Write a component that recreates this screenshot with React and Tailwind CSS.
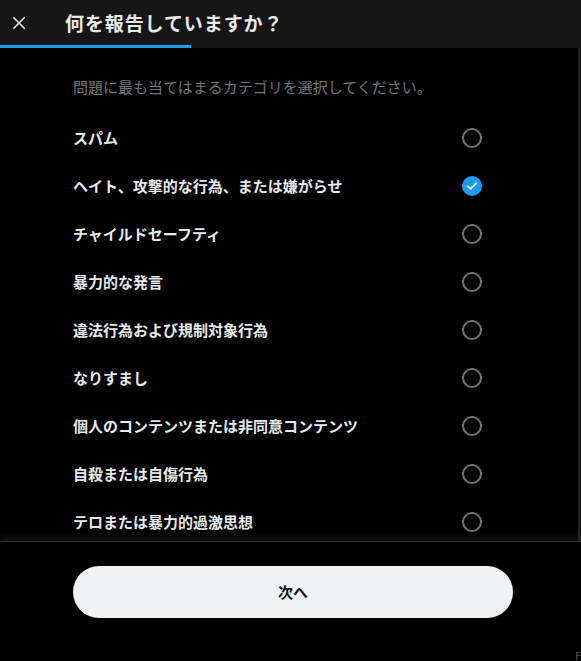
import { useState } from 'react'

const categories = [
  'スパム',
  'ヘイト、攻撃的な行為、または嫌がらせ',
  'チャイルドセーフティ',
  '暴力的な発言',
  '違法行為および規制対象行為',
  'なりすまし',
  '個人のコンテンツまたは非同意コンテンツ',
  '自殺または自傷行為',
  'テロまたは暴力的過激思想',
]

function Radio({ checked }) {
  if (checked) {
    return (
      <span className="flex h-5 w-5 items-center justify-center rounded-full bg-[#1d9bf0]">
        <svg viewBox="0 0 24 24" className="h-3.5 w-3.5" fill="none" stroke="white" strokeWidth="3" strokeLinecap="round" strokeLinejoin="round">
          <path d="M5 12.5l4.5 4.5L19 7.5" />
        </svg>
      </span>
    )
  }
  return <span className="block h-5 w-5 rounded-full border-2 border-[#6e767d]" />
}

export default function App() {
  const [selected, setSelected] = useState(1)

  return (
    <div
      className="flex h-[661px] w-[581px] flex-col overflow-hidden bg-black text-[#e7e9ea]"
      style={{ fontFamily: '"Noto Sans CJK JP", "Noto Sans", sans-serif' }}
    >
      {/* ヘッダー */}
      <div className="flex shrink-0 flex-col bg-[#161616]">
        <div className="flex h-[45px] items-center">
          <button className="ml-[9px] flex h-5 w-5 items-center justify-center text-[#e7e9ea]">
            <svg viewBox="0 0 24 24" className="h-[18px] w-[18px]" fill="none" stroke="currentColor" strokeWidth="2.2" strokeLinecap="round">
              <path d="M5 5l14 14M19 5L5 19" />
            </svg>
          </button>
          <h1 className="ml-[36px] text-[19px] font-bold leading-6 tracking-[0.9px]">何を報告していますか？</h1>
        </div>
        <div className="h-[3px] w-full">
          <div className="h-full w-[191px] bg-[#1d9bf0]" />
        </div>
      </div>

      {/* 本文 */}
      <div className="flex min-h-0 flex-1">
        <div className="min-w-0 flex-1 overflow-hidden">
          <p className="ml-[73px] mt-[29px] text-[15px] leading-5 text-[#71767b]">
            問題に最も当てはまるカテゴリを選択してください。
          </p>
          <ul className="mt-[17px] w-[482px] pl-[73px]">
            {categories.map((c, i) => (
              <li
                key={c}
                onClick={() => setSelected(i)}
                className="flex h-12 cursor-pointer items-center justify-between"
              >
                <span className="text-[15px] font-bold leading-5">{c}</span>
                <Radio checked={selected === i} />
              </li>
            ))}
          </ul>
        </div>
        <div className="w-[3px] shrink-0 bg-[#1c1c1c]" />
      </div>

      {/* フッター */}
      <div className="relative flex h-[120px] shrink-0 flex-col border-t border-[#2a2a2a] bg-black shadow-[0_-4px_6px_rgba(255,255,255,0.07)]">
        <button className="ml-[73px] mt-[24px] h-[52px] w-[440px] rounded-full bg-[#eff3f4] text-[15px] font-bold text-[#0f1419]">
          次へ
        </button>
        <div className="mt-auto flex h-[19px] items-end">
          <div className="ml-[526px] h-full w-px bg-[#2f2f2f]" />
          <div className="ml-[30px] h-full w-px bg-[#2f2f2f]" />
          <span className="ml-[19px] text-[11px] leading-none text-[#555]">F</span>
        </div>
      </div>
    </div>
  )
}
